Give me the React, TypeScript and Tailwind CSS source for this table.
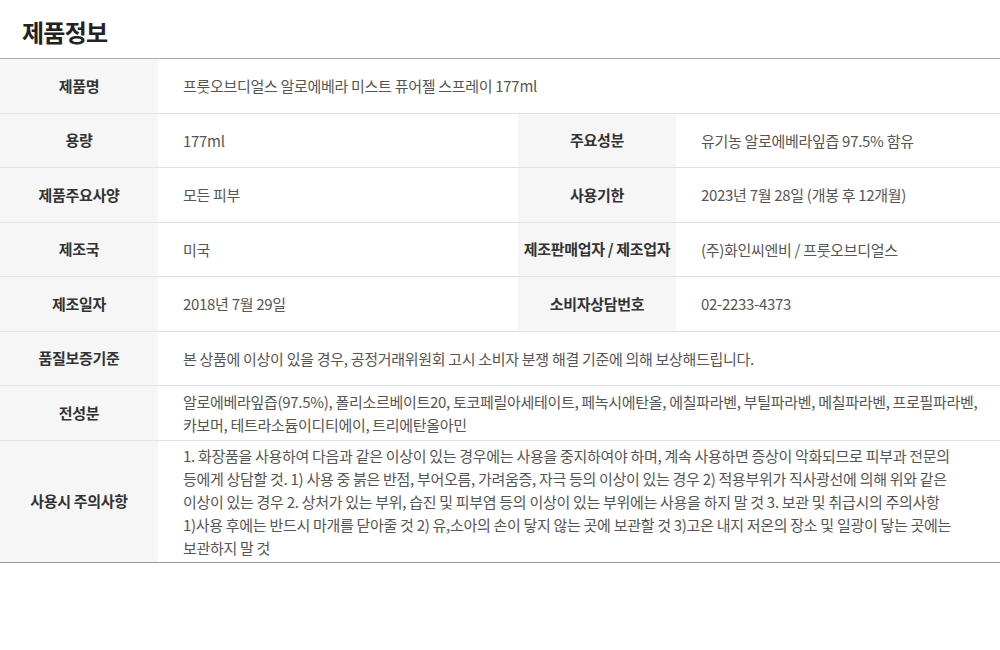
type Row = { cells: [string, string][]; narrow?: boolean };

const rows: Row[] = [
  { cells: [["제품명", "프룻오브디얼스 알로에베라 미스트 퓨어젤 스프레이 177ml"]] },
  { cells: [["용량", "177ml"], ["주요성분", "유기농 알로에베라잎즙 97.5% 함유"]] },
  { cells: [["제품주요사양", "모든 피부"], ["사용기한", "2023년 7월 28일 (개봉 후 12개월)"]] },
  { cells: [["제조국", "미국"], ["제조판매업자 / 제조업자", "(주)화인씨엔비 / 프룻오브디얼스"]] },
  { cells: [["제조일자", "2018년 7월 29일"], ["소비자상담번호", "02-2233-4373"]] },
  { cells: [["품질보증기준", "본 상품에 이상이 있을 경우, 공정거래위원회 고시 소비자 분쟁 해결 기준에 의해 보상해드립니다."]] },
  {
    cells: [[
      "전성분",
      "알로에베라잎즙(97.5%), 폴리소르베이트20, 토코페릴아세테이트, 페녹시에탄올, 에칠파라벤, 부틸파라벤, 메칠파라벤, 프로필파라벤, 카보머, 테트라소듐이디티에이, 트리에탄올아민",
    ]],
  },
  {
    narrow: true,
    cells: [[
      "사용시 주의사항",
      "1. 화장품을 사용하여 다음과 같은 이상이 있는 경우에는 사용을 중지하여야 하며, 계속 사용하면 증상이 악화되므로 피부과 전문의 등에게 상담할 것. 1) 사용 중 붉은 반점, 부어오름, 가려움증, 자극 등의 이상이 있는 경우 2) 적용부위가 직사광선에 의해 위와 같은 이상이 있는 경우 2. 상처가 있는 부위, 습진 및 피부염 등의 이상이 있는 부위에는 사용을 하지 말 것 3. 보관 및 취급시의 주의사항 1)\u2060사용 후에는 반드시 마개를 닫아줄 것 2) 유,\u2060소아의 손이 닿지 않는 곳에 보관할 것 3)\u2060고온 내지 저온의 장소 및 일광이 닿는 곳에는 보관하지 말 것",
    ]],
  },
];

export default function App() {
  return (
    <div className="w-[1000px] h-[650px] bg-white font-['Noto_Sans_CJK_KR',sans-serif]">
      <h2 className="pl-[22px] pt-[15px] pb-[10px] text-[24px] leading-[33px] font-bold text-[#222] tracking-[-0.03em]">제품정보</h2>
      <table className="w-full table-fixed border-collapse border-t border-b border-t-[#aaaaaa] border-b-[#999999]">
        <colgroup>
          <col className="w-[158px]" />
          <col className="w-[360px]" />
          <col className="w-[158px]" />
          <col />
        </colgroup>
        <tbody>
          {rows.map((r, i) => (
            <tr key={i} className="border-b border-[#e2e2e2] last:border-b-0">
              {r.cells.map(([label, value]) => [
                <th
                  key={label}
                  className="bg-[#f6f6f6] text-center align-middle text-[15px] font-bold text-[#333] h-[54.5px] px-1 whitespace-nowrap tracking-[-0.02em]"
                >
                  {label}
                </th>,
                <td
                  key={label + "v"}
                  colSpan={r.cells.length === 1 ? 3 : 1}
                  className={`align-middle text-[15px] leading-[23px] text-[#555] pl-[25px] py-[3px] break-keep tracking-[-0.02em] ${
                    r.narrow ? "pr-[40px]" : "pr-[12px]"
                  }`}
                >
                  {value}
                </td>,
              ])}
            </tr>
          ))}
        </tbody>
      </table>
    </div>
  );
}
